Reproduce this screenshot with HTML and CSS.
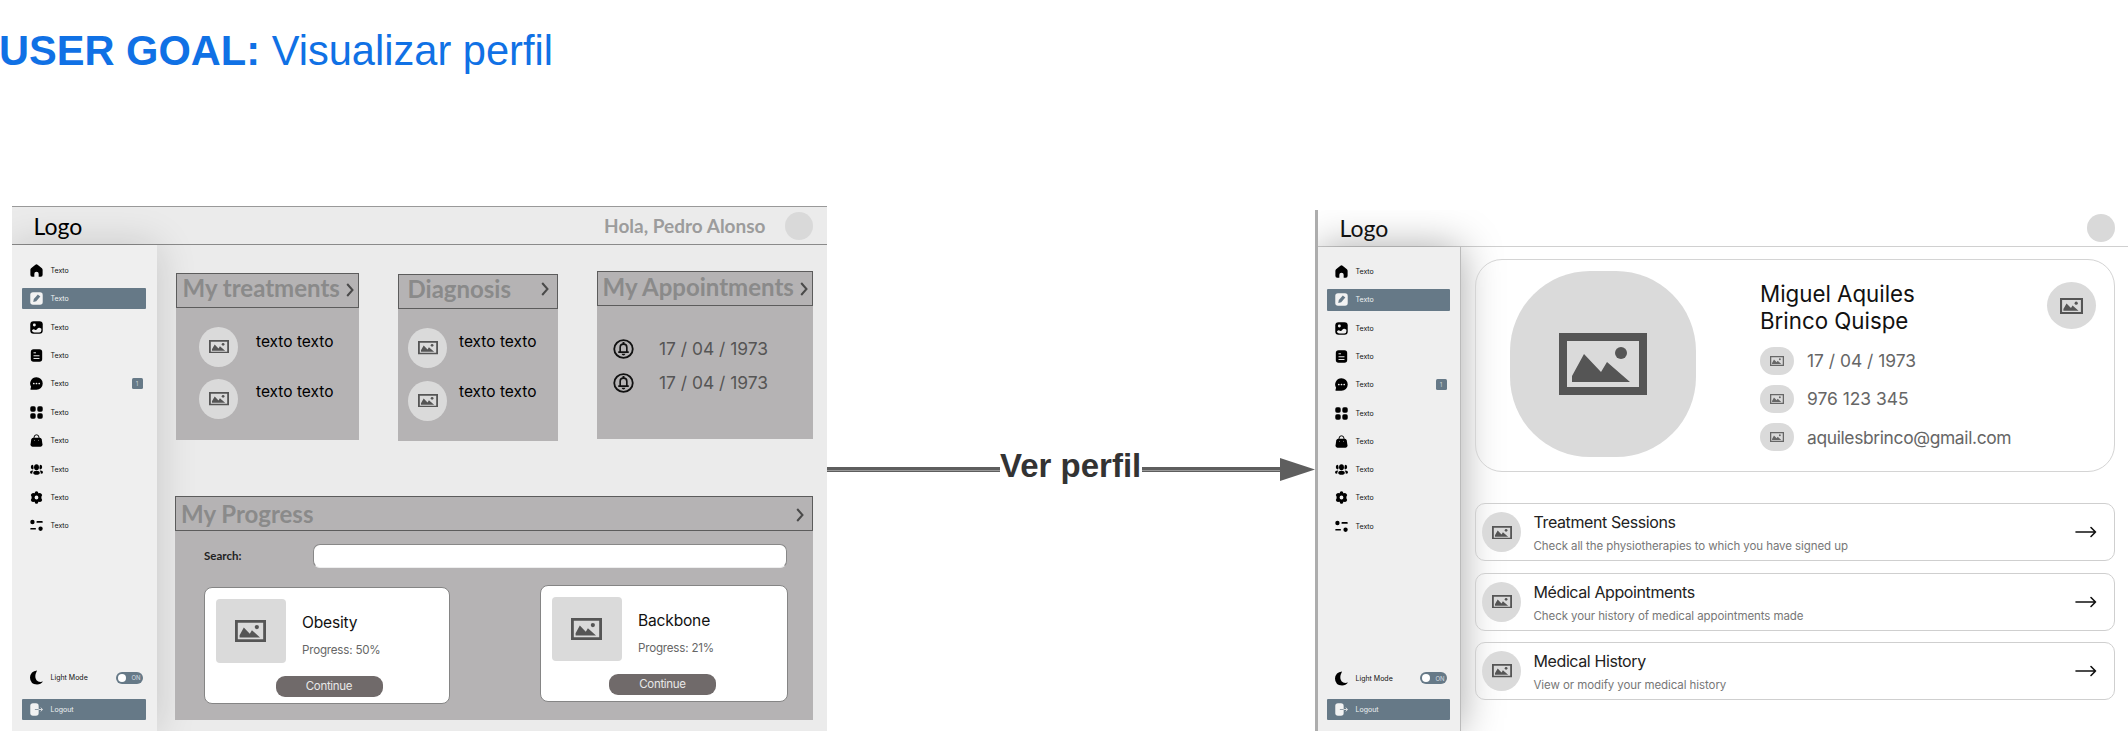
FILE: index.html
```
<!DOCTYPE html>
<html lang="es">
<head>
<meta charset="utf-8">
<title>User goal: Visualizar perfil</title>
<link rel="stylesheet" href="styles.css">
</head>
<body>
<svg class="defs" aria-hidden="true">
  <symbol id="pic" viewBox="0 0 88 62" preserveAspectRatio="none"><path fill-rule="evenodd" d="M0 0H88V62H0ZM8 8V54H80V8Z"/><path d="M13 49V43L25 21L42 39L48 29L71 49Z"/><circle cx="62" cy="20" r="6"/></symbol>
  <symbol id="home" viewBox="0 0 24 24"><path d="M10 1.2Q12-.4 14 1.2L22 8Q23.300 9.300 23.300 11V20Q23.300 23.500 20 23.500H16V18Q16 14.500 12 14.500T8 18V23.500H4Q.7 23.500.7 20V11Q.7 9.300 2 8Z"/></symbol>
  <symbol id="edit" viewBox="0 0 24 24"><rect x=".5" y=".5" width="23" height="23" rx="5"/><path fill="#667987" d="M6 18.500L7 13L14.500 4.500L19 8.500L11.500 17Z"/></symbol>
  <symbol id="image" viewBox="0 0 24 24"><rect x=".5" y=".5" width="23" height="23" rx="6"/><circle class="cut" cx="8" cy="7.500" r="2.700"/><path class="cut" d="M3.500 17.500Q6.500 14 9 16Q11 18 13.500 14.500Q16.500 10.500 21 14.500V17Q21 21 17 21H8Q4.500 21 3.500 17.500Z"/></symbol>
  <symbol id="doc" viewBox="0 0 24 24"><rect x="1.500" y=".5" width="21" height="23" rx="5"/><path class="cutline" d="M6.500 7H11M6.500 12.500H17.500M6.500 17.500H17.500"/></symbol>
  <symbol id="chat" viewBox="0 0 24 24"><path d="M12 .5A11.500 11.500 0 1 1 12 23.500H2Q0 23.500 1 21.500L2 18A11.500 11.500 0 0 1 12 .5Z"/><g class="cut"><circle cx="7" cy="12" r="1.600"/><circle cx="12" cy="12" r="1.600"/><circle cx="17" cy="12" r="1.600"/></g></symbol>
  <symbol id="grid" viewBox="0 0 24 24"><rect x=".5" y=".5" width="10" height="10" rx="3"/><rect x="13.500" y=".5" width="10" height="10" rx="3"/><rect x=".5" y="13.500" width="10" height="10" rx="3"/><rect x="13.500" y="13.500" width="10" height="10" rx="3"/></symbol>
  <symbol id="bag" viewBox="0 0 24 24"><path d="M6 7H18Q21 7 21.700 10L23 19Q23.500 23.500 19.500 23.500H4.500Q.5 23.500 1 19L2.300 10Q3 7 6 7Z"/><path fill="none" stroke="#000" stroke-width="1.800" d="M7.500 8V6Q7.500 1.500 12 1.500T16.500 6V8"/><g class="cut"><circle cx="8.300" cy="11.500" r=".8"/><circle cx="15.700" cy="11.500" r=".8"/></g></symbol>
  <symbol id="users" viewBox="0 0 24 24"><ellipse cx="12" cy="8" rx="4.500" ry="5.500"/><path d="M5.500 3Q1.500 3 1.500 7.500T5.500 12Q7 11 6.500 7.500T5.500 3ZM18.500 3Q22.500 3 22.500 7.500T18.500 12Q17 11 17.500 7.500T18.500 3Z"/><ellipse cx="12" cy="18" rx="6" ry="3.800"/><path d="M4.500 14Q0 14 0 17T4 20Q4 16 6 14.500ZM19.500 14Q24 14 24 17T20 20Q20 16 18 14.500Z"/></symbol>
  <symbol id="gear" viewBox="0 0 24 24"><path fill-rule="evenodd" d="M9.500 1.500Q12-.5 14.500 1.500L15.500 4L18.500 3.500Q21.500 4 22.500 7.500L21 10.500V13.500L22.500 16.500Q21.500 20 18.500 20.500L15.500 20L14.500 22.500Q12 24.500 9.500 22.500L8.500 20L5.500 20.500Q2.500 20 1.500 16.500L3 13.500V10.500L1.500 7.500Q2.500 4 5.500 3.500L8.500 4ZM12 8.500A3.500 3.500 0 1 0 12 15.500A3.500 3.500 0 1 0 12 8.500Z"/></symbol>
  <symbol id="sliders" viewBox="0 0 24 24"><circle cx="4.500" cy="5.500" r="4"/><circle cx="19.500" cy="18" r="4"/><path fill="none" stroke="#000" stroke-width="3.200" stroke-linecap="round" d="M13.500 5.500H22M2 18H9.500"/></symbol>
  <symbol id="moon" viewBox="0 0 24 26"><path d="M13 0Q7 12 12 18Q16 23 24 20.500Q20 26 13 26Q0 25 0 13Q1 1 13 0Z"/></symbol>
  <symbol id="exit" viewBox="0 0 24 24"><rect x=".5" y=".5" width="15.500" height="23" rx="5"/><path fill="none" stroke="#667987" stroke-width="1.300" d="M9 12H16"/><path fill="none" stroke="#eee" stroke-width="1.600" d="M16 12H22.500M20 8.500L23 12L20 15.500"/></symbol>
  <symbol id="chev" viewBox="0 0 8 14"><path fill="none" stroke="#4a4a4a" stroke-width="2" d="M1.200 1L6.500 7L1.200 13"/></symbol>
  <symbol id="bell" viewBox="0 0 22 20" preserveAspectRatio="none"><ellipse cx="11" cy="10" rx="9.700" ry="8.900" fill="none" stroke="#111" stroke-width="1.900"/><path fill="none" stroke="#111" stroke-width="1.700" d="M5.500 13.200H16.500M7.500 13V8.500Q7.500 5.200 11 5.200T14.500 8.500V13"/><path fill="#111" d="M10 3H12V5H10ZM9 14.700H13Q12.500 16.500 11 16.500T9 14.700Z"/></symbol>
  <symbol id="arrow" viewBox="0 0 22 12"><path fill="none" stroke="#111" stroke-width="1.600" stroke-linecap="round" stroke-linejoin="round" d="M1 6H20.500M16 1.500L20.500 6L16 10.500"/></symbol>
</svg>

<h1 class="title"><b>USER GOAL:</b> Visualizar perfil</h1>

<main class="board">
  <section class="screen home">
    <header class="topbar">
      <span class="logo">Logo</span>
      <span class="hello">Hola, Pedro Alonso</span>
      <span class="user"></span>
    </header>
    <div class="columns">
      <nav class="side">
        <a class="item"><svg><use href="#home"/></svg>Texto</a>
        <a class="item on"><svg><use href="#edit"/></svg>Texto</a>
        <a class="item"><svg><use href="#image"/></svg>Texto</a>
        <a class="item"><svg><use href="#doc"/></svg>Texto</a>
        <a class="item"><svg><use href="#chat"/></svg>Texto<i class="badge">1</i></a>
        <a class="item"><svg><use href="#grid"/></svg>Texto</a>
        <a class="item"><svg><use href="#bag"/></svg>Texto</a>
        <a class="item"><svg><use href="#users"/></svg>Texto</a>
        <a class="item"><svg><use href="#gear"/></svg>Texto</a>
        <a class="item"><svg><use href="#sliders"/></svg>Texto</a>
        <a class="item mode"><svg class="moon"><use href="#moon"/></svg>Light Mode<i class="toggle">ON</i></a>
        <a class="item on logout"><svg><use href="#exit"/></svg>Logout</a>
      </nav>
      <div class="dash">
        <div class="cards">
          <article class="card treat">
            <h2 class="bar">My treatments<svg class="chev"><use href="#chev"/></svg></h2>
            <div class="pairs">
              <div class="discs"><span class="disc"><svg><use href="#pic"/></svg></span><span class="disc"><svg><use href="#pic"/></svg></span></div>
              <div class="labels"><p>texto texto</p><p>texto texto</p></div>
            </div>
          </article>
          <article class="card diag">
            <h2 class="bar">Diagnosis<svg class="chev"><use href="#chev"/></svg></h2>
            <div class="pairs">
              <div class="discs"><span class="disc"><svg><use href="#pic"/></svg></span><span class="disc"><svg><use href="#pic"/></svg></span></div>
              <div class="labels"><p>texto texto</p><p>texto texto</p></div>
            </div>
          </article>
          <article class="card appt">
            <h2 class="bar">My Appointments<svg class="chev"><use href="#chev"/></svg></h2>
            <div class="dates">
              <p><svg class="bell"><use href="#bell"/></svg>17 / 04 / 1973</p>
              <p><svg class="bell"><use href="#bell"/></svg>17 / 04 / 1973</p>
            </div>
          </article>
        </div>
        <article class="progress">
          <h2 class="bar">My Progress<svg class="chev"><use href="#chev"/></svg></h2>
          <div class="search"><span>Search:</span><span class="field"></span></div>
          <div class="plans">
            <div class="plan">
              <div class="plan-top">
                <span class="thumb"><svg><use href="#pic"/></svg></span>
                <div><h3>Obesity</h3><p>Progress: 50%</p></div>
              </div>
              <span class="button">Continue</span>
            </div>
            <div class="plan second">
              <div class="plan-top">
                <span class="thumb"><svg><use href="#pic"/></svg></span>
                <div><h3>Backbone</h3><p>Progress: 21%</p></div>
              </div>
              <span class="button">Continue</span>
            </div>
          </div>
        </article>
      </div>
    </div>
  </section>

  <div class="link">
    <span class="line start"></span>
    <span class="link-text">Ver perfil</span>
    <span class="line"></span>
    <svg class="head" viewBox="0 0 35 23"><path d="M0 0L35 11.500L0 23Z"/></svg>
  </div>

  <section class="screen profile">
    <header class="topbar">
      <span class="logo">Logo</span>
      <span class="user"></span>
    </header>
    <div class="columns">
      <nav class="side">
        <a class="item"><svg><use href="#home"/></svg>Texto</a>
        <a class="item on"><svg><use href="#edit"/></svg>Texto</a>
        <a class="item"><svg><use href="#image"/></svg>Texto</a>
        <a class="item"><svg><use href="#doc"/></svg>Texto</a>
        <a class="item"><svg><use href="#chat"/></svg>Texto<i class="badge">1</i></a>
        <a class="item"><svg><use href="#grid"/></svg>Texto</a>
        <a class="item"><svg><use href="#bag"/></svg>Texto</a>
        <a class="item"><svg><use href="#users"/></svg>Texto</a>
        <a class="item"><svg><use href="#gear"/></svg>Texto</a>
        <a class="item"><svg><use href="#sliders"/></svg>Texto</a>
        <a class="item mode"><svg class="moon"><use href="#moon"/></svg>Light Mode<i class="toggle">ON</i></a>
        <a class="item on logout"><svg><use href="#exit"/></svg>Logout</a>
      </nav>
      <div class="details">
        <article class="person">
          <span class="photo"><svg><use href="#pic"/></svg></span>
          <div class="facts">
            <h2>Miguel Aquiles<br>Brinco Quispe</h2>
            <p><span class="pill"><svg><use href="#pic"/></svg></span>17 / 04 / 1973</p>
            <p><span class="pill"><svg><use href="#pic"/></svg></span>976 123 345</p>
            <p class="mail"><span class="pill"><svg><use href="#pic"/></svg></span>aquilesbrinco@gmail.com</p>
          </div>
          <span class="edit"><svg><use href="#pic"/></svg></span>
        </article>
        <div class="rows">
          <article class="row">
            <span class="disc"><svg><use href="#pic"/></svg></span>
            <div><h3>Treatment Sessions</h3><p>Check all the physiotherapies to which you have signed up</p></div>
            <svg class="arrow"><use href="#arrow"/></svg>
          </article>
          <article class="row">
            <span class="disc"><svg><use href="#pic"/></svg></span>
            <div><h3>Médical Appointments</h3><p>Check your history of medical appointments made</p></div>
            <svg class="arrow"><use href="#arrow"/></svg>
          </article>
          <article class="row">
            <span class="disc"><svg><use href="#pic"/></svg></span>
            <div><h3>Medical History</h3><p>View or modify your medical history</p></div>
            <svg class="arrow"><use href="#arrow"/></svg>
          </article>
        </div>
      </div>
    </div>
  </section>
</main>
</body>
</html>
```

FILE: styles.css
```
* { box-sizing: border-box; margin: 0; padding: 0; }
body { width: 2128px; height: 731px; overflow: hidden; background: #fff; font-family: Inter, sans-serif; color: #111; }
.defs { display: none; }
svg { display: block; flex: none; }
p, h1, h2, h3, span, a { white-space: nowrap; }
.cut { fill: #efefef; }
.cutline { fill: none; stroke: #efefef; stroke-width: 1.8; }

.title { height: 206px; padding-top: 27px; font: 400 41.600px/47px "Liberation Sans", Arial, sans-serif; color: #1071e5; }
.title b { margin-left: -1px; }
.board { display: flex; height: 525px; }

/* Screens */
.screen { display: flex; flex-direction: column; flex: none; overflow: hidden; height: 525px; }
.home { width: 815px; margin-left: 12px; background: #ebebeb; border-top: 1px solid #999; }
.profile { width: 813px; height: 521px; margin-top: 4px; border-left: 3px solid #adadad; background: #fff; }
.topbar { display: flex; flex: none; align-items: center; }
.home .topbar { height: 38px; border-bottom: 1px solid #8a8a8a; padding: 0 14px 0 21.500px; }
.profile .topbar { height: 37px; border-bottom: 1px solid #d0d0d0; padding: 0 13px 0 21.500px; }
.logo, .hello { position: relative; z-index: 2; font-family: Lato, sans-serif; }
.logo { font-size: 23px; line-height: 26px; }
.home .logo { color: #000; }
.hello { margin-left: auto; font-size: 19px; font-weight: 700; color: #9c9c9c; }
.user { width: 28px; height: 28px; margin-left: 19.500px; border-radius: 50%; background: #d9d9d9; }
.profile .user { margin-left: auto; }
.columns { display: flex; flex: 1; }

/* Side menu */
.side { display: flex; flex-direction: column; flex: none; gap: 7px; background: #efefef; box-shadow: 0 0 38px rgba(0, 0, 0, .16); }
.home .side { width: 145px; padding: 14.600px 11px 0 10px; }
.profile .side { width: 143px; padding: 14px 10px 0 9px; gap: 6.900px; border-right: 1px solid #bbb; box-shadow: 0 0 38px rgba(0, 0, 0, .34); }
.item { display: flex; flex: none; align-items: center; height: 21.400px; padding: 0 3.500px 0 8px; border-radius: 1px; font-size: 7px; font-weight: 400; color: #111; }
.item svg { width: 13px; height: 13px; margin-right: 7.500px; fill: #000; }
.on { background: #667987; color: #eef1f3; }
.item.on { color: #eef1f3; }
.item.on svg { fill: #f2f2f2; }
.badge { display: flex; align-items: center; justify-content: center; width: 11px; height: 11px; margin-left: auto; border-radius: 1.500px; background: #667987; color: #cbd3d9; font-size: 6px; font-style: normal; }
.mode { margin-top: 123.500px; }
.item .moon { width: 13px; height: 15px; }
.logout { margin-top: 3.500px; }
.toggle { display: flex; align-items: center; justify-content: space-between; width: 27px; height: 12px; margin-left: auto; padding: 0 2px; border-radius: 6px; background: #667987; color: #d5dce1; font-size: 6px; font-style: normal; }
.toggle::before { content: ""; width: 8px; height: 8px; border-radius: 50%; background: #fff; }

/* Dashboard */
.dash { position: relative; z-index: 1; flex: 1; padding-left: 18px; }
.cards { display: flex; height: 251px; align-items: flex-start; padding-left: 1px; }
.card { background: #b5b3b4; }
.treat { width: 183px; height: 167px; margin-top: 28px; }
.diag { width: 160px; height: 167px; margin: 29px 0 0 39px; }
.appt { width: 216px; height: 168px; margin: 26px 0 0 39px; }
.bar { display: flex; align-items: center; height: 35px; padding: 0 4px 6px 5.500px; border: 1px solid #5c5c5c; font: 700 24px/28px Lato, sans-serif; color: #8a8a8a; }
.chev { width: 8px; height: 14px; margin: 4px 0 0 auto; }
.diag .bar { padding-left: 8.500px; }
.appt .bar { padding: 0 4px 4px 4.500px; }
.diag .chev { margin: 0 4px 0 auto; }
.pairs { display: flex; padding: 18.500px 0 0 23px; }
.diag .pairs { padding: 19px 0 0 10px; }
.discs { display: flex; flex-direction: column; gap: 12.500px; }
.disc { display: flex; align-items: center; justify-content: center; flex: none; width: 39px; height: 40px; border-radius: 50%; background: #dadada; }
.disc svg { width: 20px; height: 13.500px; fill: #555; }
.labels { padding: 4px 0 0 18px; font-size: 15.500px; line-height: 22px; color: #000; }
.diag .labels { padding: 3px 0 0 12px; }
.labels p + p { margin-top: 28px; }
.dates { padding: 31px 0 0 16px; font-size: 17.400px; line-height: 24px; color: #555; }
.dates p { display: flex; align-items: center; }
.dates p + p { margin-top: 10px; }
.bell { width: 21px; height: 20px; margin-right: 25px; }

.progress { width: 638px; height: 224px; background: #b5b3b4; }
.progress .bar { padding: 0 8px 0 5px; }
.progress .chev { margin-top: 2px; }
.search { display: flex; align-items: center; height: 24px; margin: 13px 26px 0 29px; font: 700 11.500px Lato, sans-serif; color: #222; }
.search span:first-child { margin-top: -2px; }
.field { width: 474px; height: 24px; margin-left: auto; border: 1px solid #888; border-bottom-color: #eee; border-radius: 7px; background: #fff; }
.plans { display: flex; justify-content: space-between; align-items: flex-start; padding: 19px 25px 0 29px; }
.plan { width: 246px; height: 117px; padding: 11px 11px 11px 10.500px; border: 1px solid #858585; border-radius: 8px; background: #fff; }
.second { width: 248px; margin-top: -2px; }
.plan-top { display: flex; }
.thumb { display: flex; align-items: center; justify-content: center; width: 70px; height: 64px; margin-right: 16.500px; border-radius: 4px; background: #dadada; }
.thumb svg { width: 31px; height: 22px; fill: #555; }
.plan h3 { margin-top: 12.500px; font-size: 15.600px; font-weight: 400; line-height: 22px; letter-spacing: -.2px; }
.plan p { margin-top: 7.500px; font-size: 11.600px; line-height: 18px; letter-spacing: -.2px; color: #666; }
.button { display: block; width: 107px; height: 21px; margin: 13px 0 0 60px; border-radius: 9px; background: #706a6a; color: #e8e8e8; font-size: 11.500px; line-height: 21px; letter-spacing: -.3px; text-align: center; }
.second .button { margin-left: 57.500px; }

/* Connector between the screens */
.link { display: flex; flex: none; align-items: center; width: 488px; height: 40px; margin-top: 243px; }
.line { flex: 1; height: 5px; margin-top: 1px; background: linear-gradient(#5e5e5e 3px, #999 3px, #999 4px, #5e5e5e 4px); }
.start { flex: 0 0 173px; }
.link-text { flex: 0 0 142px; margin-top: -7px; font: 700 33px/36px "Liberation Sans", Arial, sans-serif; color: #333; }
.head { width: 35px; height: 23px; fill: #5e5e5e; }

/* Profile */
.details { position: relative; z-index: 1; flex: 1; padding: 12px 13px 0 14px; }
.person { display: flex; height: 213px; border: 1px solid #d4d4d4; border-radius: 27px; padding: 11px 18px 0 34px; }
.photo { display: flex; align-items: center; justify-content: center; flex: none; width: 186px; height: 186px; border-radius: 80px; background: #dadada; }
.photo svg { width: 88px; height: 62px; fill: #555; }
.facts { margin-left: 64px; }
.facts h2 { margin-top: 9px; font-size: 22.300px; font-weight: 400; line-height: 27.300px; }
.facts p { display: flex; align-items: center; height: 28px; margin-top: 10.300px; font-size: 17.400px; color: #666; }
.facts h2 + p { margin-top: 12px; }
.facts .mail { letter-spacing: -.35px; }
.pill { display: flex; align-items: center; justify-content: center; width: 34px; height: 28px; margin-right: 13px; border-radius: 14px; background: #dadada; }
.pill svg { width: 14px; height: 10px; fill: #666; }
.edit { display: flex; align-items: center; justify-content: center; width: 49px; height: 47px; margin: 11px 0 0 auto; border-radius: 50%; background: #dadada; }
.edit svg { width: 23px; height: 16px; fill: #555; }
.rows { display: flex; flex-direction: column; gap: 11.300px; padding-top: 31.300px; }
.row { display: flex; align-items: center; height: 58px; border: 1px solid #cfcfcf; border-radius: 10px; padding: 0 17.500px 0 6px; }
.row div { margin-left: 12.500px; }
.row h3 { margin-top: 2px; font-size: 16px; font-weight: 400; line-height: 22px; letter-spacing: -.4px; color: #222; }
.row p { margin-top: 4px; font-size: 11.500px; line-height: 18px; letter-spacing: -.08px; color: #777; }
.arrow { width: 22px; height: 12px; margin-left: auto; }
```
